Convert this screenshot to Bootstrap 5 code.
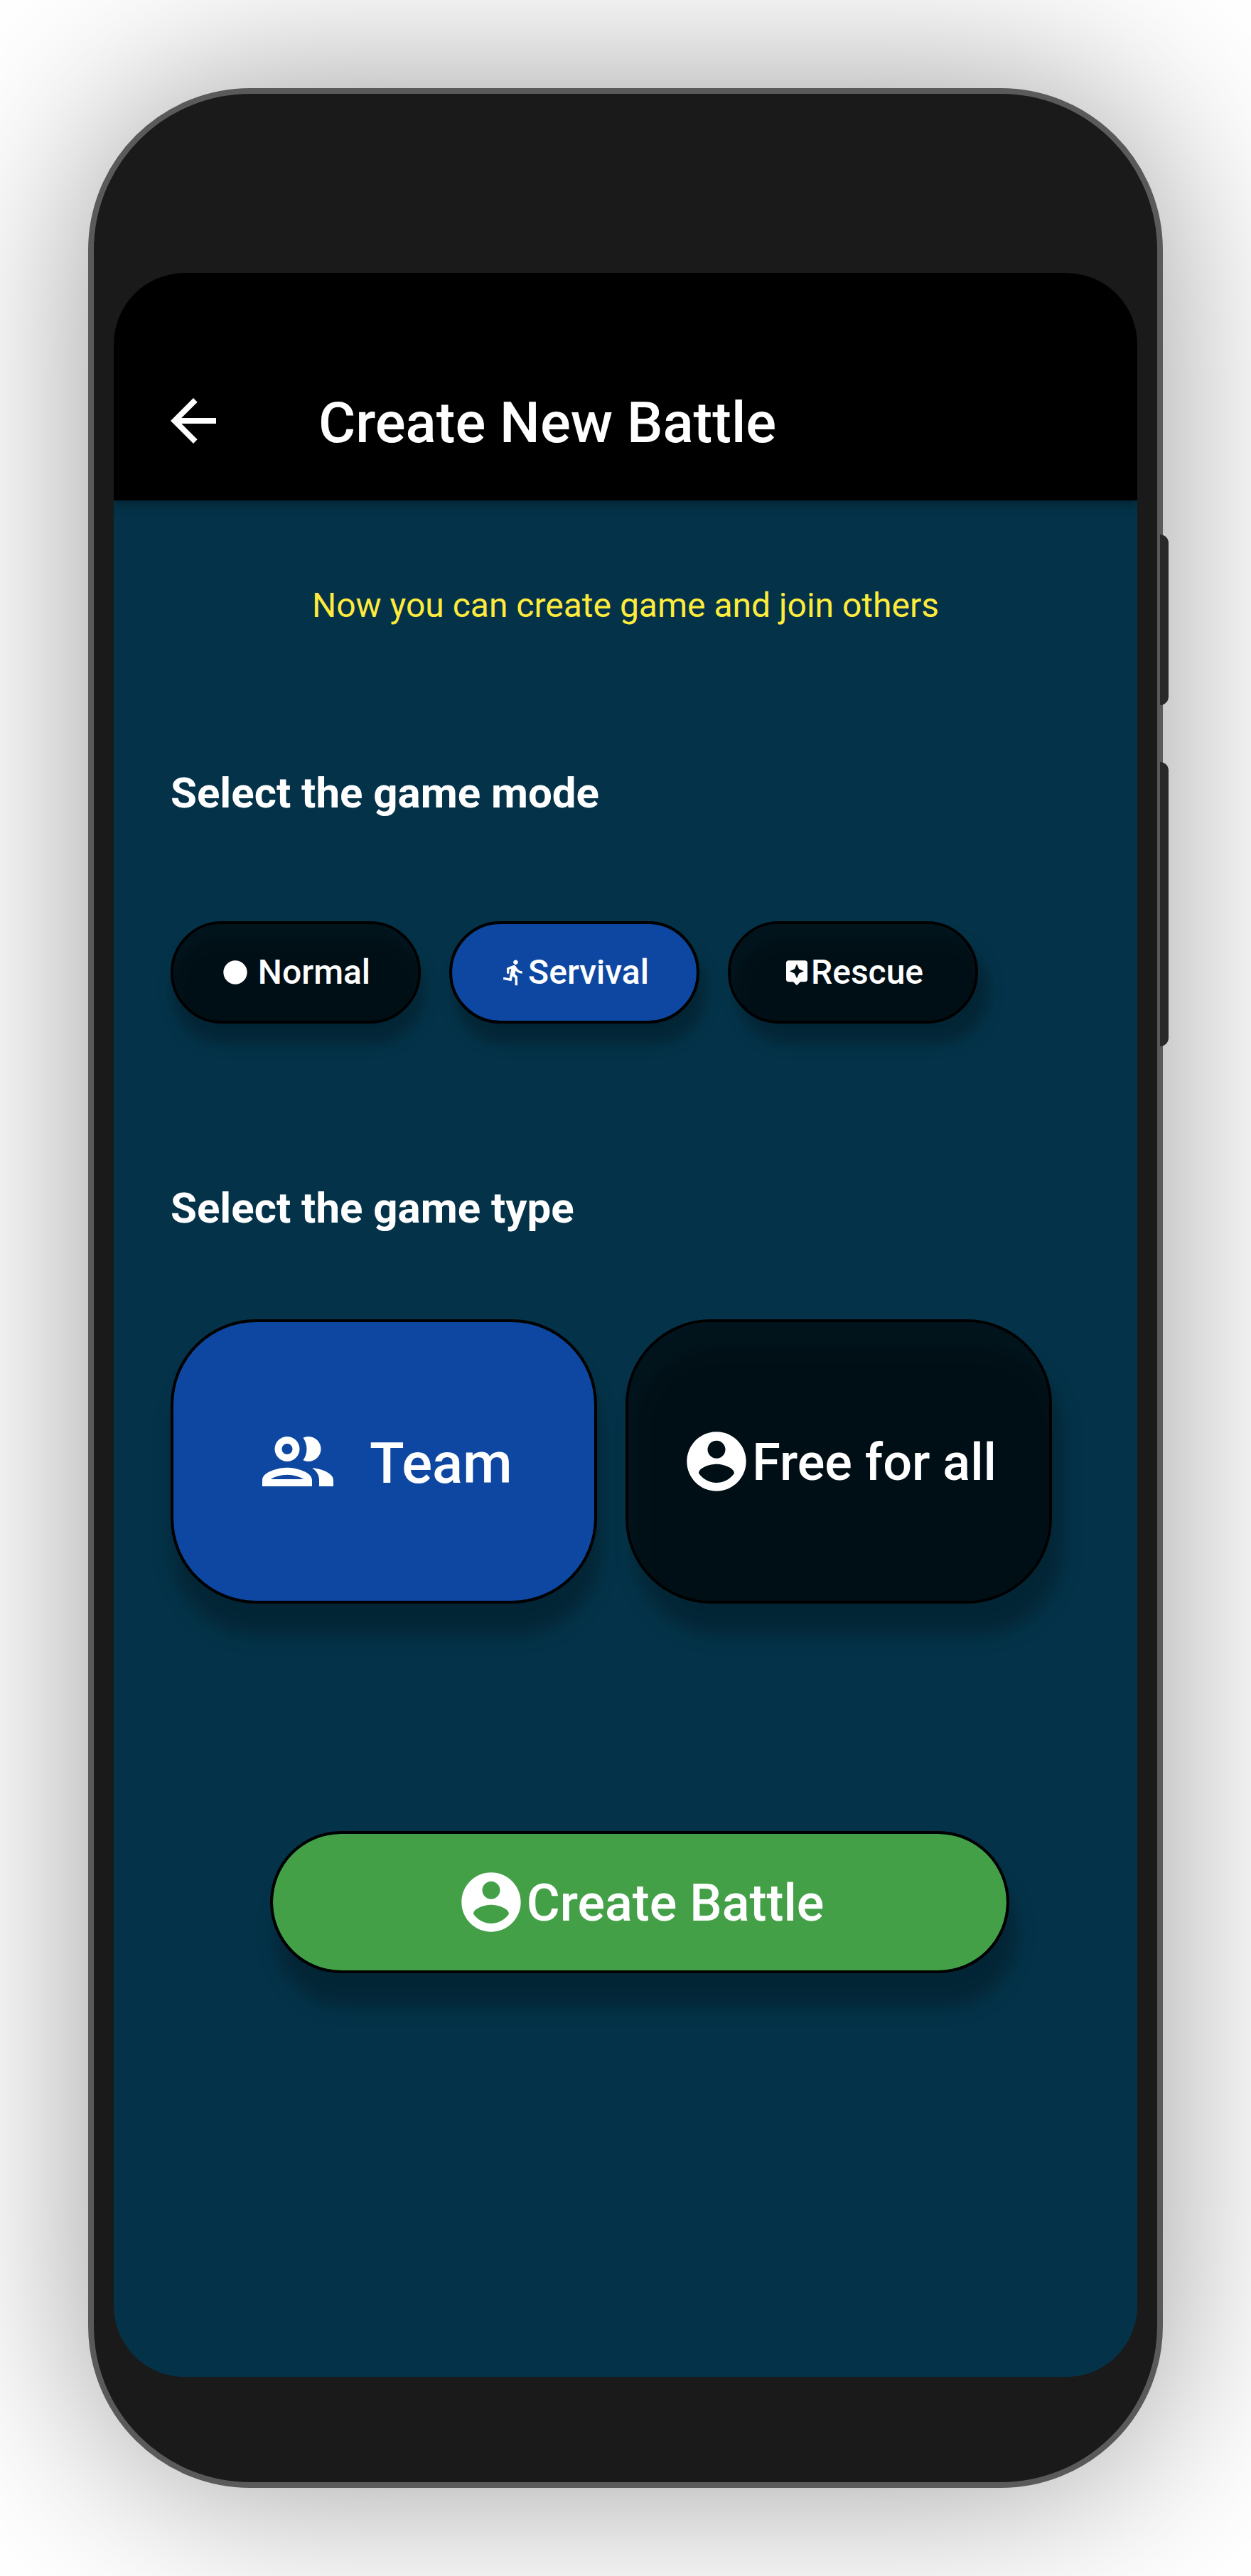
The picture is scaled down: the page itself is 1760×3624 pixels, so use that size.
<!DOCTYPE html>
<html lang="en">
<head>
<meta charset="utf-8">
<meta name="viewport" content="width=device-width, initial-scale=1">
<title>Create New Battle</title>
<link href="https://cdn.jsdelivr.net/npm/bootstrap@5.3.0/dist/css/bootstrap.min.css" rel="stylesheet">
<style>
  body { font-family: Roboto, sans-serif; background: #fff; }
  .stage { width: 1760px; height: 3624px; padding: 124px; }
  .phone { width: 1512px; height: 3376px; border: 8px solid #5a5a5a; border-radius: 228px; background: #1a1a1a; padding: 252px 28px 148px; box-shadow: 0 0 272px rgba(0,0,0,.4); }
  .side-key { left: 1500px; width: 12px; background: #292929; border-radius: 0 12px 12px 0; }
  .key-power { top: 620px; height: 240px; }
  .key-volume { top: 940px; height: 400px; }
  .screen { border-radius: 100px; background: #043349; }
  .topbar { height: 320px; padding: 96px 64px 0; background: #000; box-shadow: 0 4px 16px rgba(0,0,0,.4); }
  .topbar h1 { font-size: 80px; font-weight: 500; line-height: 96px; margin: 6px 0 0 128px; white-space: nowrap; }
  .content-area { padding: 0 80px; }
  .hint { font-size: 48px; line-height: 57px; color: #ffeb3b; margin-top: 119px; }
  .section-title { font-size: 60px; font-weight: 700; line-height: 71px; }
  .title-mode { margin-top: 200px; }
  .title-type { margin-top: 224px; }
  .modes { margin-top: 145px; gap: 40px; }
  .types { margin-top: 121px; gap: 40px; }
  .icon { fill: #fff; flex: none; }
  .pick { --fill: rgba(0,0,0,.6); --sx: 4px; --sy: 27px; --sb: 10px; isolation: isolate; position: relative; border: 0; padding: 0; color: #fff; font-weight: 500; white-space: pre; display: flex; align-items: center; justify-content: center; border-radius: var(--rad); }
  .pick:hover { color: #fff; }
  .pick::before, .pick::after { content: ""; position: absolute; inset: 0; z-index: -1; border-radius: inherit; }
  .pick::before { inset: -2px; background: rgba(0,0,0,.26); transform: translate(var(--sx), var(--sy)); filter: blur(var(--sb)); }
  .pick::after { background: var(--fill); background-clip: padding-box; border: 4px solid #000; }
  .pick-blue { --fill: #0d47a1; }
  .pick-green { --fill: #43a047; }
  .pick-sm { --rad: 72px; width: 352px; height: 144px; font-size: 48px; line-height: 56px; }
  .pick-lg { --rad: 120px; --sy: 43px; --sb: 13px; width: 600px; height: 400px; font-size: 72px; line-height: 85px; }
  .pick-team { font-size: 80px; line-height: 94px; }
  .pick-cta { --rad: 100px; --sx: 9px; --sy: 46px; --sb: 13px; width: 1040px; height: 200px; font-size: 72px; line-height: 85px; margin: 320px 0 0 140px; }
  .pick-lg span, .pick-cta span { padding-top: 3px; }
  .pick-team span { padding-top: 6px; margin-left: 3px; }
  .far { --sx: 14px; }
  .mid { --sx: 8px; }
</style>
</head>
<body>
<main class="stage overflow-hidden">
  <div class="phone position-relative d-flex">
    <span class="side-key key-power position-absolute"></span>
    <span class="side-key key-volume position-absolute"></span>
    <div class="screen flex-grow-1 overflow-hidden d-flex flex-column">
      <header class="topbar d-flex align-items-center text-white position-relative">
        <svg class="icon" width="96" height="96" viewBox="0 0 24 24"><path d="M20 11H7.83l5.59-5.59L12 4l-8 8 8 8 1.41-1.41L7.83 13H20v-2z"/></svg>
        <h1>Create New Battle</h1>
      </header>
      <section class="content-area">
        <p class="hint text-center mb-0">Now you can create game and join others</p>
        <h2 class="section-title title-mode text-white mb-0">Select the game mode</h2>
        <div class="modes d-flex">
          <button type="button" class="btn pick pick-sm"><svg class="icon" width="40" height="40" viewBox="0 0 24 24"><circle cx="12" cy="12" r="10"/></svg><span> Normal</span></button>
          <button type="button" class="btn pick pick-sm pick-blue mid"><svg class="icon" width="40" height="40" viewBox="0 0 24 24"><path d="M13.49 5.48c1.1 0 2-.9 2-2s-.9-2-2-2-2 .9-2 2 .9 2 2 2zm-3.6 13.9l1-4.4 2.1 2v6h2v-7.5l-2.1-2 .6-3c1.3 1.5 3.3 2.5 5.5 2.5v-2c-1.9 0-3.5-1-4.3-2.4l-1-1.6c-.4-.6-1-1-1.7-1-.3 0-.5.1-.8.1l-5.2 2.2v4.7h2v-3.4l1.8-.7-1.6 8.1-4.9-1-.4 2 7 1.4z"/></svg><span>Servival</span></button>
          <button type="button" class="btn pick pick-sm far"><svg class="icon" width="40" height="40" viewBox="0 0 24 24"><path d="M19 2H5c-1.11 0-2 .9-2 2v14c0 1.1.89 2 2 2h4l3 3 3-3h4c1.1 0 2-.9 2-2V4c0-1.1-.9-2-2-2zm-5.12 10.88L12 17l-1.88-4.12L6 11l4.12-1.88L12 5l1.88 4.12L18 11l-4.12 1.88z"/></svg><span>Rescue</span></button>
        </div>
        <h2 class="section-title title-type text-white mb-0">Select the game type</h2>
        <div class="types d-flex">
          <button type="button" class="btn pick pick-lg pick-blue pick-team"><svg class="icon" width="120" height="120" viewBox="0 0 24 24"><path d="M9 13.75c-2.34 0-7 1.17-7 3.5V19h14v-1.75c0-2.33-4.66-3.5-7-3.5zM4.34 17c.84-.58 2.87-1.25 4.66-1.25s3.82.67 4.66 1.25H4.34zM9 12c1.93 0 3.5-1.57 3.5-3.5S10.93 5 9 5 5.5 6.57 5.5 8.5 7.07 12 9 12zm0-5c.83 0 1.5.67 1.5 1.5S9.83 10 9 10s-1.5-.67-1.5-1.5S8.17 7 9 7zm7.04 6.81c1.16.84 1.96 1.96 1.96 3.44V19h4v-1.75c0-2.02-3.5-3.17-5.96-3.44zM15 12c1.93 0 3.5-1.57 3.5-3.5S16.93 5 15 5c-.54 0-1.04.13-1.5.35.63.89 1 1.98 1 3.15s-.37 2.26-1 3.15c.46.22.96.35 1.5.35z"/></svg><span>  Team</span></button>
          <button type="button" class="btn pick pick-lg far"><svg class="icon" width="100" height="100" viewBox="0 0 24 24"><path d="M12 2C6.48 2 2 6.48 2 12s4.48 10 10 10 10-4.48 10-10S17.52 2 12 2zm0 3c1.66 0 3 1.34 3 3s-1.34 3-3 3-3-1.34-3-3 1.34-3 3-3zm0 14.2c-2.5 0-4.71-1.28-6-3.22.03-1.99 4-3.08 6-3.08 1.99 0 5.97 1.09 6 3.08-1.29 1.94-3.5 3.22-6 3.22z"/></svg><span>Free for all</span></button>
        </div>
        <button type="button" class="btn pick pick-cta pick-green"><svg class="icon" width="100" height="100" viewBox="0 0 24 24"><path d="M12 2C6.48 2 2 6.48 2 12s4.48 10 10 10 10-4.48 10-10S17.52 2 12 2zm0 3c1.66 0 3 1.34 3 3s-1.34 3-3 3-3-1.34-3-3 1.34-3 3-3zm0 14.2c-2.5 0-4.71-1.28-6-3.22.03-1.99 4-3.08 6-3.08 1.99 0 5.97 1.09 6 3.08-1.29 1.94-3.5 3.22-6 3.22z"/></svg><span>Create Battle</span></button>
      </section>
    </div>
  </div>
</main>
<script src="https://cdn.jsdelivr.net/npm/bootstrap@5.3.0/dist/js/bootstrap.bundle.min.js"></script>
</body>
</html>
